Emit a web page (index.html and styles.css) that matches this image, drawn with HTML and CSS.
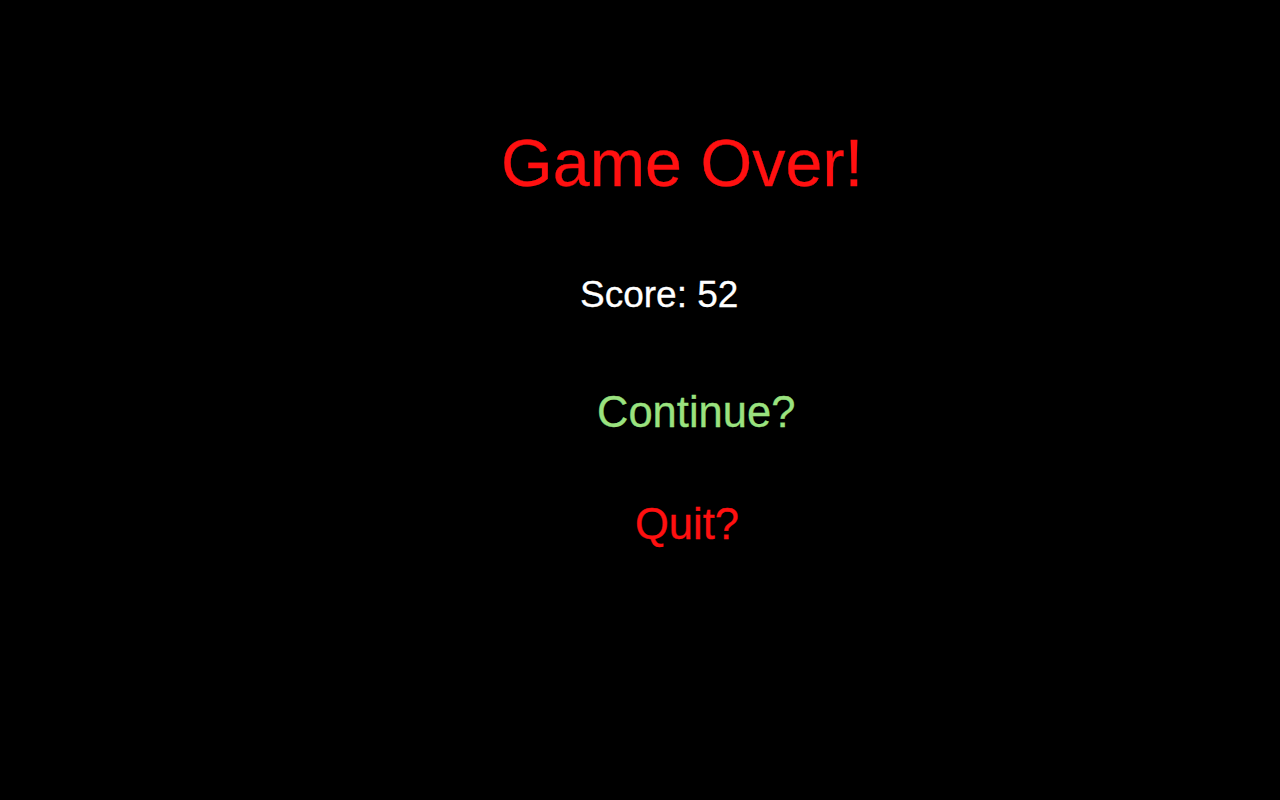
FILE: index.html
```html
<!DOCTYPE html>
<html lang="en">
<head>
<meta charset="utf-8">
<title>Game Over</title>
<link rel="stylesheet" href="styles.css">
</head>
<body>
<main class="screen">
  <h1 class="title">Game Over!</h1>
  <p class="score">Score: 52</p>
  <button class="option option-continue" type="button">Continue?</button>
  <button class="option option-quit" type="button">Quit?</button>
</main>
</body>
</html>
```
FILE: styles.css
```css
html, body {
  margin: 0;
  padding: 0;
  background: #000;
}
.screen {
  width: 1280px;
  height: 800px;
  box-sizing: border-box;
  padding-top: 130px;
  display: flex;
  flex-direction: column;
  align-items: flex-start;
  font-family: "Liberation Sans", Arial, sans-serif;
  -webkit-text-stroke: 0.3px currentColor;
}
.title {
  margin: 0 0 80px 501px;
  font-size: 66.5px;
  line-height: 66px;
  font-weight: normal;
  color: #ff1010;
}
.score {
  margin: 0 0 78px 580px;
  font-size: 37px;
  line-height: 37px;
  color: #fff;
}
.option {
  background: none;
  border: 0;
  padding: 0;
  font-family: inherit;
  font-size: 43.5px;
  line-height: 42px;
  cursor: pointer;
}
.option-continue {
  margin: 0 0 70px 597px;
  color: #9ae27f;
}
.option-quit {
  margin: 0 0 0 635px;
  color: #ff1010;
}
```
